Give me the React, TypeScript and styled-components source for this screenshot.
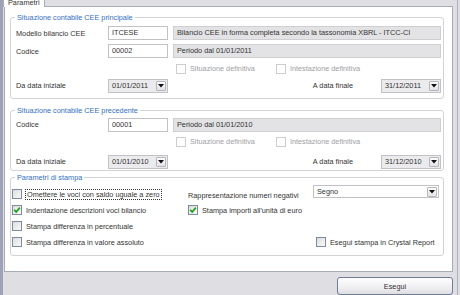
import React from "react";
import styled, { createGlobalStyle } from "styled-components";

const GlobalStyle = createGlobalStyle`
  html, body {
    margin: 0;
    padding: 0;
    background: #dedee3;
  }
  body {
    font-family: "Liberation Sans", Arial, sans-serif;
    font-size: 7.3px;
    line-height: 9px;
    color: #333;
  }
  * {
    box-sizing: border-box;
  }
`;

const Window = styled.div`
  width: 458px;
  height: 295px;
  display: flex;
  flex-direction: column;
  border-left: 3px solid #9ea2b6;
  border-right: 1px solid #aeb1bd;
  background: #dedee3;
  overflow: hidden;
`;

const TabStrip = styled.div`
  height: 6px;
  display: flex;
`;

const Tab = styled.div`
  position: relative;
  z-index: 1;
  width: 42px;
  height: 7px;
  background: #fff;
  border-left: 1px solid #a8abb8;
  border-right: 1px solid #a8abb8;
  padding-left: 4px;
  line-height: 6px;
  overflow: hidden;
`;

const Panel = styled.div`
  margin-left: 1px;
  width: 449px;
  height: 266px;
  background: #fff;
  border: 1px solid #a8abb8;
  padding: 10px 8px 0 5px;
  display: flex;
  flex-direction: column;
`;

const Group = styled.div<{ $top: number; $pad: string }>`
  position: relative;
  margin-top: ${(p) => p.$top}px;
  border: 1px solid #d3d3d6;
  border-radius: 3px;
  padding: ${(p) => p.$pad};
`;

const GroupTitle = styled.span`
  position: absolute;
  top: -6px;
  left: 4px;
  padding: 0 2px;
  background: #fff;
  color: #3470c2;
  line-height: 11px;
`;

const Row = styled.div<{ $h: number; $mt?: number }>`
  display: flex;
  align-items: center;
  height: ${(p) => p.$h}px;
  margin-top: ${(p) => p.$mt ?? 0}px;
`;

const Label = styled.span<{ $w?: number }>`
  flex-shrink: 0;
  width: ${(p) => (p.$w ? `${p.$w}px` : "auto")};
  white-space: nowrap;
`;

const Field = styled.div<{ $w?: number; $gray?: boolean }>`
  height: 14px;
  width: ${(p) => (p.$w ? `${p.$w}px` : "auto")};
  flex: ${(p) => (p.$w ? "none" : "1")};
  margin-left: ${(p) => (p.$gray ? 5 : 0)}px;
  border: 1px solid ${(p) => (p.$gray ? "#cfcfd2" : "#c2c2c6")};
  background: ${(p) => (p.$gray ? "#e3e3e5" : "#fff")};
  padding-left: 3px;
  line-height: 12px;
  white-space: nowrap;
  overflow: hidden;
`;

const Combo = styled.div<{ $w: number; $bg: string; $ml?: number }>`
  display: flex;
  align-items: center;
  flex-shrink: 0;
  width: ${(p) => p.$w}px;
  height: 14px;
  margin-left: ${(p) => p.$ml ?? 0}px;
  border: 1px solid #c2c2c6;
  background: ${(p) => p.$bg};
  padding: 0 1px 0 3px;
`;

const ComboText = styled.span`
  flex: 1;
  white-space: nowrap;
`;

const DropButton = styled.span`
  width: 10px;
  height: 10px;
  display: flex;
  align-items: center;
  justify-content: center;
  border: 1px solid #b6b6bc;
  border-radius: 1px;
  background: linear-gradient(#fbfbfb, #e4e4e8);
`;

const Spacer = styled.span`
  flex: 1;
`;

const CheckRow = styled.div<{ $indent: number }>`
  display: flex;
  align-items: center;
  gap: 21px;
  padding-left: ${(p) => p.$indent}px;
`;

const CheckItem = styled.label<{ $disabled?: boolean }>`
  display: flex;
  align-items: center;
  gap: 4px;
  white-space: nowrap;
  color: ${(p) => (p.$disabled ? "#a0a0a4" : "#333")};
`;

const Box = styled.span<{ $disabled?: boolean }>`
  width: 10px;
  height: 10px;
  flex-shrink: 0;
  display: flex;
  align-items: center;
  justify-content: center;
  border: 1px solid ${(p) => (p.$disabled ? "#cdcdd0" : "#7d8aa0")};
  background: ${(p) =>
    p.$disabled ? "#fff" : "linear-gradient(135deg, #dcdcd8, #fbfbfb)"};
`;

const Focus = styled.span`
  outline: 1px dotted #333;
  outline-offset: 0;
  padding: 0 1px;
`;

const PrintGrid = styled.div`
  display: grid;
  grid-template-columns: 176px 1fr;
  grid-auto-rows: 16px;
`;

const Cell = styled.div<{ $indent?: number }>`
  display: flex;
  align-items: center;
  padding-left: ${(p) => p.$indent ?? 0}px;
`;

const NegCell = styled.div`
  display: flex;
  align-items: flex-start;
`;

const NegLabel = styled.span`
  padding-top: 5px;
  white-space: nowrap;
`;

const SelectWrap = styled.div`
  margin-left: auto;
  margin-top: -1px;
  display: flex;
  align-items: center;
  width: 126px;
  height: 13px;
  border: 1px solid #c2c2c6;
  background: #fff;
  padding: 0 1px 0 3px;
`;

const ButtonRow = styled.div`
  display: flex;
  justify-content: flex-end;
  padding: 5px 4px 0 0;
`;

const Button = styled.button`
  width: 116px;
  height: 18px;
  padding: 0;
  border: 1px solid #6f7d98;
  border-radius: 3px;
  background: linear-gradient(#fefefe, #ececef 70%, #dcdce2);
  font: inherit;
  color: #333;
`;

const Arrow = () => (
  <svg width="6" height="4" viewBox="0 0 6 4">
    <path d="M0 0 H6 L3 3.5 Z" fill="#111" />
  </svg>
);

const Tick = () => (
  <svg width="8" height="8" viewBox="0 0 8 8">
    <path d="M1.2 3.8 L3.2 5.9 L6.9 1.6" fill="none" stroke="#21a121" strokeWidth="1.7" />
  </svg>
);

const Check = ({
  text,
  checked,
  disabled,
  focused,
}: {
  text: string;
  checked?: boolean;
  disabled?: boolean;
  focused?: boolean;
}) => (
  <CheckItem $disabled={disabled}>
    <Box $disabled={disabled}>{checked && <Tick />}</Box>
    {focused ? <Focus>{text}</Focus> : <span>{text}</span>}
  </CheckItem>
);

const DateCombo = ({ value, ml }: { value: string; ml?: number }) => (
  <Combo $w={60} $bg="#ebebed" $ml={ml}>
    <ComboText>{value}</ComboText>
    <DropButton>
      <Arrow />
    </DropButton>
  </Combo>
);

const DefinitiveRow = () => (
  <CheckRow $indent={160}>
    <Check text="Situazione definitiva" disabled />
    <Check text="Intestazione definitiva" disabled />
  </CheckRow>
);

export default function App() {
  return (
    <>
      <GlobalStyle />
      <Window>
        <TabStrip>
          <Tab>Parametri</Tab>
        </TabStrip>
        <Panel>
          <Group $top={0} $pad="6px 2px 4px 5px">
            <GroupTitle>Situazione contabile CEE principale</GroupTitle>
            <Row $h={18}>
              <Label $w={92}>Modello bilancio CEE</Label>
              <Field $w={60}>ITCESE</Field>
              <Field $gray>Bilancio CEE in forma completa secondo la tassonomia XBRL - ITCC-CI</Field>
            </Row>
            <Row $h={18}>
              <Label $w={92}>Codice</Label>
              <Field $w={60}>00002</Field>
              <Field $gray>Periodo dal 01/01/2011</Field>
            </Row>
            <Row $h={17}>
              <DefinitiveRow />
            </Row>
            <Row $h={17}>
              <Label $w={92}>Da data iniziale</Label>
              <DateCombo value="01/01/2011" />
              <Spacer />
              <Label>A data finale</Label>
              <DateCombo value="31/12/2011" ml={28} />
            </Row>
          </Group>

          <Group $top={11} $pad="5px 2px 0 5px">
            <GroupTitle>Situazione contabile CEE precedente</GroupTitle>
            <Row $h={17}>
              <Label $w={92}>Codice</Label>
              <Field $w={60}>00001</Field>
              <Field $gray>Periodo dal 01/01/2010</Field>
            </Row>
            <Row $h={17}>
              <DefinitiveRow />
            </Row>
            <Row $h={17} $mt={3}>
              <Label $w={92}>Da data iniziale</Label>
              <DateCombo value="01/01/2010" />
              <Spacer />
              <Label>A data finale</Label>
              <DateCombo value="31/12/2010" ml={28} />
            </Row>
          </Group>

          <Group $top={6} $pad="8px 4px 5px 1px">
            <GroupTitle>Parametri di stampa</GroupTitle>
            <PrintGrid>
              <Cell>
                <Check text="Omettere le voci con saldo uguale a zero" focused />
              </Cell>
              <NegCell>
                <NegLabel>Rappresentazione numeri negativi</NegLabel>
                <SelectWrap>
                  <ComboText>Segno</ComboText>
                  <DropButton>
                    <Arrow />
                  </DropButton>
                </SelectWrap>
              </NegCell>
              <Cell>
                <Check text="Indentazione descrizioni voci bilancio" checked />
              </Cell>
              <Cell>
                <Check text="Stampa importi all'unità di euro" checked />
              </Cell>
              <Cell>
                <Check text="Stampa differenza in percentuale" />
              </Cell>
              <Cell />
              <Cell>
                <Check text="Stampa differenza in valore assoluto" />
              </Cell>
              <Cell $indent={128}>
                <Check text="Esegui stampa in Crystal Report" />
              </Cell>
            </PrintGrid>
          </Group>
        </Panel>
        <ButtonRow>
          <Button>Esegui</Button>
        </ButtonRow>
      </Window>
    </>
  );
}
